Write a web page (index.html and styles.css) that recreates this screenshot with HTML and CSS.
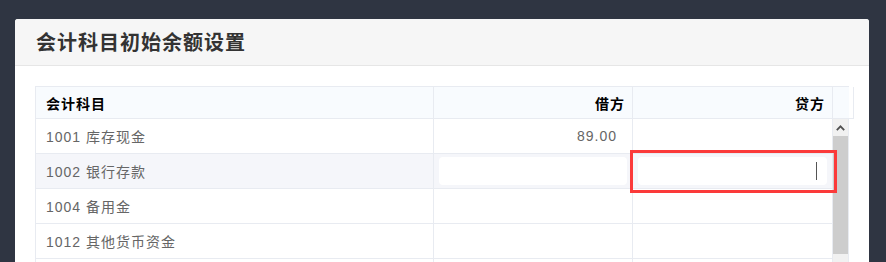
FILE: index.html
```html
<!DOCTYPE html>
<html lang="zh-CN">
<head>
<meta charset="utf-8">
<title>会计科目初始余额设置</title>
<link rel="stylesheet" href="styles.css">
</head>
<body>
<div class="dialog">
  <div class="dialog-header">
    <h1 class="dialog-title">会计科目初始余额设置</h1>
  </div>
  <div class="dialog-body">
    <div class="grid">
      <div class="grid-head">
        <div class="cell head-cell">会计科目</div>
        <div class="cell head-cell num">借方</div>
        <div class="cell head-cell num">贷方</div>
        <div class="cell head-gutter"></div>
      </div>
      <div class="grid-body">
        <div class="rows">
          <div class="row">
            <div class="cell">1001 库存现金</div>
            <div class="cell num amount">89.00</div>
            <div class="cell num"></div>
          </div>
          <div class="row row-active">
            <div class="cell">1002 银行存款</div>
            <div class="cell edit"><div class="input"></div></div>
            <div class="cell edit focus-cell">
              <div class="input input-focus"><span class="caret"></span></div>
              <div class="highlight"></div>
            </div>
          </div>
          <div class="row">
            <div class="cell">1004 备用金</div>
            <div class="cell num"></div>
            <div class="cell num"></div>
          </div>
          <div class="row">
            <div class="cell">1012 其他货币资金</div>
            <div class="cell num"></div>
            <div class="cell num"></div>
          </div>
          <div class="row">
            <div class="cell"></div>
            <div class="cell num"></div>
            <div class="cell num"></div>
          </div>
        </div>
        <div class="scrollbar">
          <div class="scroll-btn">
            <svg width="9" height="6" viewBox="0 0 9 6"><path d="M0.8 5.2 L4.5 1.4 L8.2 5.2" fill="none" stroke="#505050" stroke-width="1.8"/></svg>
          </div>
          <div class="scroll-thumb"></div>
          <div class="scroll-track"></div>
        </div>
      </div>
    </div>
  </div>
</div>
</body>
</html>
```
FILE: styles.css
```css
html, body {
  margin: 0;
  padding: 0;
}
body {
  background: #2f3542;
  font-family: "Liberation Sans", "Noto Sans CJK SC", sans-serif;
  height: 262px;
  overflow: hidden;
  padding: 19px 0 0 15px;
  box-sizing: border-box;
}
.dialog {
  width: 854px;
  background: #ffffff;
  border-radius: 3px 3px 0 0;
}
.dialog-header {
  height: 47px;
  background: #f6f6f6;
  border-bottom: 1px solid #e6e6e6;
  border-radius: 3px 3px 0 0;
  display: flex;
  align-items: center;
  padding-left: 21px;
  box-sizing: border-box;
}
.dialog-title {
  margin: 0;
  font-size: 20px;
  font-weight: bold;
  color: #333333;
  letter-spacing: 1px;
  line-height: 1;
  padding-top: 1px;
}
.dialog-body {
  padding: 20px 20px 0 20px;
}
.grid {
  width: 814px;
  border-left: 1px solid #e8ebf1;
  border-top: 1px solid #e8ebf1;
  box-sizing: border-box;
}
.grid-head {
  display: grid;
  grid-template-columns: 398px 199px 200px 16px;
  background: #f8fbfe;
}
.cell {
  box-sizing: border-box;
  border-right: 1px solid #e8ebf1;
  border-bottom: 1px solid #e8ebf1;
  padding: 0 10px;
  display: flex;
  align-items: center;
  font-size: 14px;
  letter-spacing: 1px;
  color: #666666;
  white-space: nowrap;
}
.head-cell {
  height: 32px;
  font-weight: bold;
  color: #000000;
  padding-right: 7px;
}
.num {
  justify-content: flex-end;
}
.amount {
  padding-right: 15px;
}
.grid-body {
  display: flex;
  height: 150px;
}
.rows {
  width: 797px;
}
.row {
  display: grid;
  grid-template-columns: 398px 199px 200px;
  height: 35px;
}
.row .cell {
  height: 35px;
}
.row-active {
  background: #f5f6fa;
}
.edit {
  padding: 3px 5px 3px 5px;
  align-items: stretch;
}
.focus-cell {
  position: relative;
}
.input {
  flex: 1;
  background: #ffffff;
  border-radius: 4px;
  display: flex;
  align-items: center;
  justify-content: flex-end;
  padding-right: 10px;
}
.caret {
  width: 1px;
  height: 18px;
  background: #555555;
}
.highlight {
  position: absolute;
  left: -3px;
  top: -4px;
  width: 207px;
  height: 43px;
  box-sizing: border-box;
  border: 3px solid #fb3a3a;
}
.scrollbar {
  width: 16px;
  border-right: 1px solid #e8ebf1;
  box-sizing: border-box;
  display: flex;
  flex-direction: column;
  background: #f1f1f1;
}
.scroll-btn {
  height: 17px;
  display: flex;
  align-items: center;
  justify-content: center;
}
.scroll-thumb {
  height: 118px;
  background: #cdcdcd;
}
.scroll-track {
  flex: 1;
}
```
